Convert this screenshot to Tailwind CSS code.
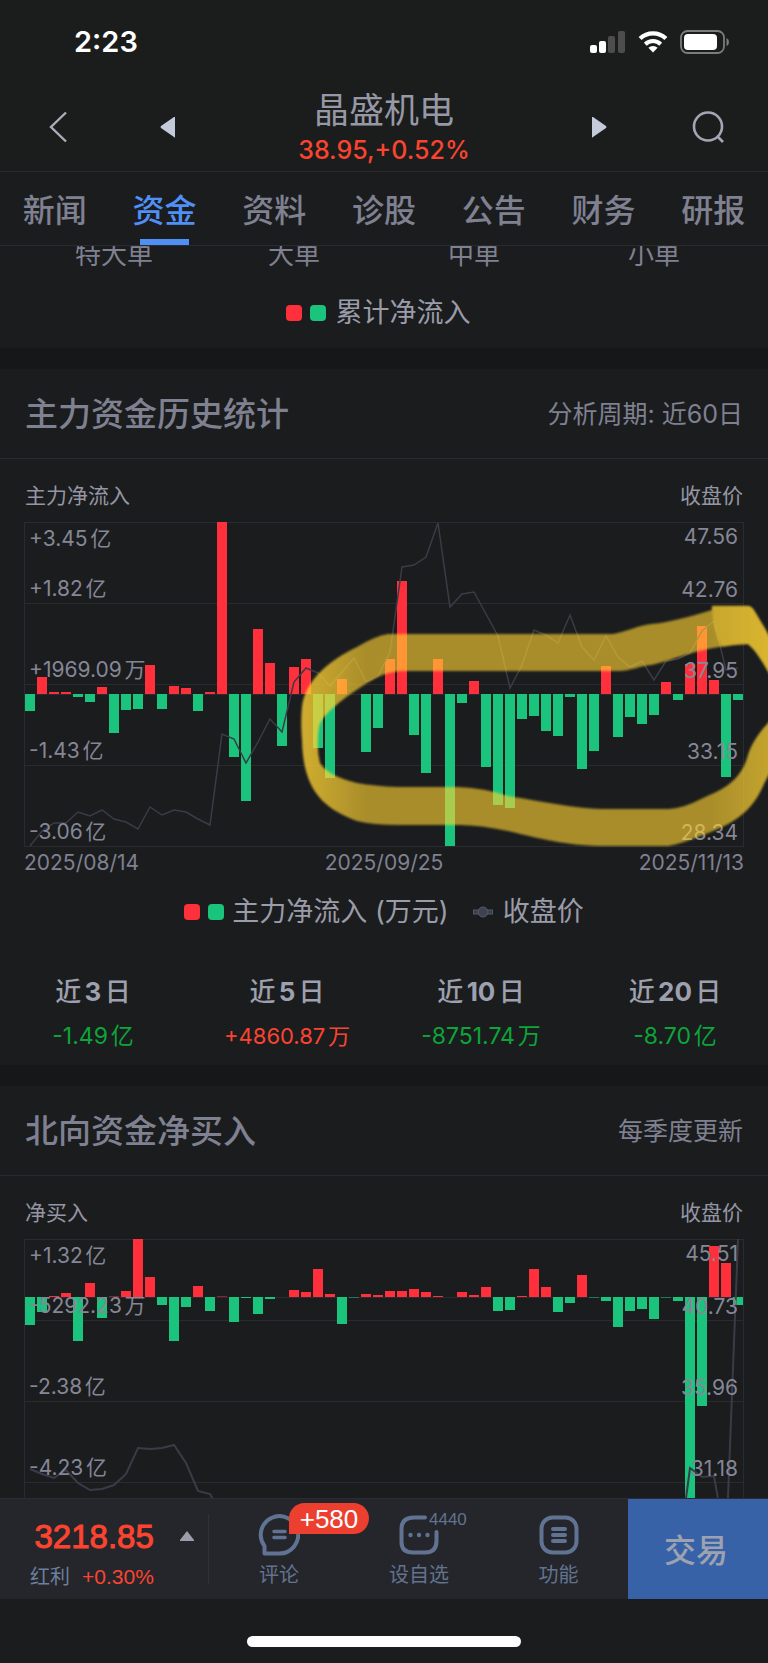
<!DOCTYPE html>
<html lang="zh-CN">
<head>
<meta charset="utf-8">
<meta name="viewport" content="width=device-width, initial-scale=1">
<title>晶盛机电 - 资金</title>
<script src="https://cdn.jsdelivr.net/npm/@tailwindcss/browser@4"></script>
</head>
<body class="bg-[#1b1c1e] font-['Inter','Noto_Sans_CJK_SC',sans-serif] text-[#7f8191] overflow-x-hidden [text-autospace:normal]">

<div class="bg-[#1b1d1c]">
  <!-- status bar -->
  <div class="flex h-[84px] items-center justify-between pl-[74px] pr-[38px]">
    <span class="text-[29px] leading-9 font-semibold text-white">2:23</span>
    <div class="flex items-center gap-3">
      <svg class="h-6 w-9" viewBox="0 0 36 24" aria-hidden="true">
        <rect x="0" y="15" width="7" height="8" rx="2" fill="#fff"/><rect x="9" y="11" width="7" height="12" rx="2" fill="#fff"/>
        <rect x="18" y="6" width="7" height="17" rx="2" fill="#4c4d4c"/><rect x="28" y="1" width="7" height="22" rx="2" fill="#4c4d4c"/>
      </svg>
      <svg class="h-6 w-[30px]" viewBox="0 0 30 24" aria-hidden="true">
        <path d="M15 22.500 L10.400 17.800 A6.600 6.600 0 0 1 19.600 17.800 Z" fill="#fff"/>
        <path d="M7.300 14.200 A11 11 0 0 1 22.700 14.200" fill="none" stroke="#fff" stroke-width="4"/>
        <path d="M2.100 8.600 A18.500 18.500 0 0 1 27.900 8.600" fill="none" stroke="#fff" stroke-width="4.200"/>
      </svg>
      <svg class="h-6 w-[50px]" viewBox="0 0 50 24" aria-hidden="true">
        <rect x="1" y="1" width="43" height="22" rx="6.500" fill="none" stroke="#7b7c7b" stroke-width="1.800"/>
        <rect x="4" y="4" width="33" height="16" rx="4" fill="#fff"/><path d="M46.500 8 Q49 9 49 12 Q49 15 46.500 16 Z" fill="#7b7c7b"/>
      </svg>
    </div>
  </div>
  <!-- header -->
  <header class="flex h-[88px] items-center border-b border-[#2a2b2f]">
    <button class="flex w-[115px] justify-center pb-px" aria-label="返回">
      <svg class="h-8 w-5" viewBox="0 0 20 32"><path d="M18 1.500 L3 16 L18 30.500" fill="none" stroke="#a9adba" stroke-width="2.400"/></svg>
    </button>
    <button class="flex w-[106px] justify-center pb-px" aria-label="上一只">
      <svg class="h-[22px] w-4" viewBox="0 0 16 22"><path d="M15 1 V21 Q15 22 14 21 L1 12 Q0 11 1 10 L14 1 Z" fill="#c3cbdb"/></svg>
    </button>
    <div class="flex-1 text-center">
      <h1 class="text-[35px] leading-[44px] text-[#9698a6]">晶盛机电</h1>
      <p class="text-[25px] leading-9 font-medium text-[#fb4430]">38.95,+0.52%</p>
    </div>
    <button class="flex w-[104px] justify-center pb-px" aria-label="下一只">
      <svg class="h-[22px] w-4" viewBox="0 0 16 22"><path d="M1 1 V21 Q1 22 2 21 L15 12 Q16 11 15 10 L2 1 Z" fill="#c3cbdb"/></svg>
    </button>
    <button class="flex w-[117px] justify-center pb-px" aria-label="搜索">
      <svg class="h-8 w-9" viewBox="0 0 36 32"><circle cx="16" cy="15.500" r="14" fill="none" stroke="#a2a6b3" stroke-width="2.600"/><path d="M25 25 L31 31" stroke="#a2a6b3" stroke-width="2.600"/></svg>
    </button>
  </header>
</div>

<nav class="grid h-[74px] grid-cols-7 border-b border-[#2a2b30] text-[32px] font-medium">
  <a href="#" class="flex items-center justify-center pt-1">新闻</a>
  <a href="#" class="relative flex items-center justify-center pt-1 text-[#5090f5]">资金<span class="absolute bottom-0 h-[6px] w-[49px] bg-[#5090f5]"></span></a>
  <a href="#" class="flex items-center justify-center pt-1">资料</a>
  <a href="#" class="flex items-center justify-center pt-1">诊股</a>
  <a href="#" class="flex items-center justify-center pt-1">公告</a>
  <a href="#" class="flex items-center justify-center pt-1">财务</a>
  <a href="#" class="flex items-center justify-center pt-1">研报</a>
</nav>

<main>
  <section>
    <div class="h-[49px] overflow-hidden px-6">
      <div class="-mt-[9px] grid grid-cols-4 text-center text-[26px] leading-9">
        <span>特大单</span><span>大单</span><span>中单</span><span>小单</span>
      </div>
    </div>
    <div class="flex items-center justify-center pb-[17px] pr-3 text-[27px] leading-9 text-[#9a9ca9]">
      <i class="mr-2 size-4 rounded-[4px] bg-[#ff2f3b]"></i><i class="mr-[10px] size-4 rounded-[4px] bg-[#1ac47d]"></i>累计净流入
    </div>
  </section>

  <div class="h-[21px] bg-[#161719]"></div>

  <section>
    <div class="flex h-[90px] items-center justify-between border-b border-[#292a2f] px-[25px]">
      <h2 class="text-[33px] leading-10 font-medium">主力资金历史统计</h2>
      <span class="text-[25px] leading-9 [text-autospace:no-autospace]">分析周期: 近60日</span>
    </div>
    <div class="flex justify-between px-[25px] pt-[23px] pb-3 text-[21px] leading-7 text-[#9496a3]"><span>主力净流入</span><span>收盘价</span></div>
    <div class="relative px-6">
      <svg id="main-chart" class="h-[325px] w-full" viewBox="0 0 720 325" preserveAspectRatio="none" role="img" aria-label="主力净流入与收盘价"></svg>
      <div class="absolute top-[3px] left-[29px] flex flex-col text-[21px] leading-7 text-[#858796]">
        <span>+3.45亿</span><span class="mt-[22px]">+1.82亿</span><span class="mt-[53px]">+1969.09万</span><span class="mt-[53px]">-1.43亿</span><span class="mt-[53px]">-3.06亿</span>
      </div>
      <div class="absolute top-px right-[30px] flex flex-col text-right text-[21px] leading-7 text-[#858796]">
        <span>47.56</span><span class="mt-[25px]">42.76</span><span class="mt-[53px]">37.95</span><span class="mt-[53px]">33.15</span><span class="mt-[53px]">28.34</span>
      </div>
      <!-- highlighter mark -->
      <svg class="pointer-events-none absolute top-0 left-0 h-[325px] w-full overflow-visible" viewBox="0 0 768 325" preserveAspectRatio="none" aria-hidden="true">
        <defs>
          <linearGradient id="ink" gradientUnits="userSpaceOnUse" x1="300" y1="0" x2="768" y2="0">
            <stop offset="0" stop-color="#ffd333" stop-opacity=".8"/><stop offset=".05" stop-color="#ffd333" stop-opacity=".74"/>
            <stop offset=".14" stop-color="#ffd333" stop-opacity=".62"/><stop offset=".88" stop-color="#ffd333" stop-opacity=".62"/>
            <stop offset="1" stop-color="#ffd333" stop-opacity=".74"/>
          </linearGradient>
          <filter id="soft" x="-5%" y="-5%" width="110%" height="110%"><feGaussianBlur stdDeviation="1.2"/></filter>
        </defs>
        <path fill="url(#ink)" fill-rule="evenodd" filter="url(#soft)" d="M712 84 L748 84 Q752 84 755 90 C762 102 774 120 780 140 C800 200 775 240 764 262 C752 290 735 302 695 316 Q680 322 668 324 L600 324 C560 323 530 314 508 309 Q480 303 460 303 L400 303 Q372 303 357 299 C325 287 303 270 302 218 C301 205 301 195 302 185 C305 158 330 138 357 125 Q375 114 388 112 L613 112 C625 110 640 103 651 102 C665 101 690 95 712 88 Z M748 122 C758 130 764 143 772 156 L782 176 C780 186 775 192 768 201 C755 215 750 226 748 233 C740 262 720 268 701 277 Q684 286 669 287 L601 287 C570 286 530 277 508 274 Q485 266 458 265 L397 265 Q375 264 357 261 Q328 254 320 241 Q316 225 319 205 C322 192 345 175 367 161 Q385 150 400 149 L619 149 C630 149 640 144 651 143 C675 138 700 124 748 122 Z"/>
        <path fill="#ffd333" fill-opacity=".36" filter="url(#soft)" d="M712 84 L748 84 Q752 84 755 90 C762 102 774 120 780 140 L772 156 C764 143 758 130 748 122 Q735 122 722 125 Q712 108 712 84 Z"/>
      </svg>
    </div>
    <div class="mt-[2px] grid grid-cols-3 px-6 text-center text-[21px] leading-7"><span class="text-left">2025/08/14</span><span>2025/09/25</span><span class="text-right">2025/11/13</span></div>
    <div class="mt-[17px] flex items-center justify-center text-[27px] leading-9 text-[#9a9ca9]">
      <i class="mr-2 size-4 rounded-[4px] bg-[#ff2f3b]"></i><i class="mr-2 size-4 rounded-[4px] bg-[#1ac47d]"></i><span>主力净流入 (万元)</span>
      <svg class="mr-[10px] ml-6 h-3 w-5" viewBox="0 0 20 12" aria-hidden="true"><rect x=".500" y="4" width="19" height="4" fill="#3a3d49" stroke="#555866"/><circle cx="10" cy="6" r="5" fill="#3f4350" stroke="#565967"/></svg><span>收盘价</span>
    </div>
    <div class="overflow-hidden pt-11 pb-[13px]">
      <dl class="-mx-1 grid grid-cols-4 text-center">
        <div><dt class="text-[26px] leading-9 font-bold text-[#9da0ae]"><span class="font-medium">近</span>3<span class="font-medium">日</span></dt><dd class="mt-[10px] text-[23px] leading-8 text-[#0ca53a]">-1.49亿</dd></div>
        <div><dt class="text-[26px] leading-9 font-bold text-[#9da0ae]"><span class="font-medium">近</span>5<span class="font-medium">日</span></dt><dd class="mt-[10px] text-[22px] leading-8 text-[#fb4430]">+4860.87万</dd></div>
        <div><dt class="text-[26px] leading-9 font-bold text-[#9da0ae]"><span class="font-medium">近</span>10<span class="font-medium">日</span></dt><dd class="mt-[10px] text-[23px] leading-8 text-[#0ca53a]">-8751.74万</dd></div>
        <div><dt class="text-[26px] leading-9 font-bold text-[#9da0ae]"><span class="font-medium">近</span>20<span class="font-medium">日</span></dt><dd class="mt-[10px] text-[23px] leading-8 text-[#0ca53a]">-8.70亿</dd></div>
      </dl>
    </div>
  </section>

  <div class="h-[21px] bg-[#161719]"></div>

  <section>
    <div class="flex h-[90px] items-center justify-between border-b border-[#292a2f] px-[25px]">
      <h2 class="text-[33px] leading-10 font-medium">北向资金净买入</h2>
      <span class="text-[25px] leading-9">每季度更新</span>
    </div>
    <div class="flex justify-between px-[25px] pt-[23px] pb-3 text-[21px] leading-7 text-[#9496a3]"><span>净买入</span><span>收盘价</span></div>
    <div class="relative h-[259px] overflow-hidden px-6">
      <svg id="north-chart" class="h-[325px] w-full" viewBox="0 0 720 325" preserveAspectRatio="none" role="img" aria-label="北向资金净买入与收盘价"></svg>
      <div class="absolute top-[3px] left-[29px] flex flex-col text-[21px] leading-7 text-[#858796]">
        <span>+1.32亿</span><span class="mt-[22px]">-5292.23万</span><span class="mt-[53px]">-2.38亿</span><span class="mt-[53px]">-4.23亿</span>
      </div>
      <div class="absolute top-px right-[30px] flex flex-col text-right text-[21px] leading-7 text-[#858796]">
        <span>45.51</span><span class="mt-[25px]">40.73</span><span class="mt-[53px]">35.96</span><span class="mt-[53px]">31.18</span>
      </div>
    </div>
  </section>
</main>

<footer>
  <div class="grid h-[101px] grid-cols-[209fr_140fr_140fr_139fr_140fr] border-t border-[#2c2d34] bg-[#25262b]">
    <div class="flex items-center">
      <div class="flex flex-1 pt-3 pl-[30px]">
        <div class="flex flex-col items-end font-['Liberation_Sans','Noto_Sans_CJK_SC',sans-serif]">
          <span class="text-[33px] leading-10 text-[#fb4430] [-webkit-text-stroke:1px]">3218.85</span>
          <span class="mt-1 flex gap-3 text-[20px] leading-8"><span class="text-[#6b7f9e]">红利</span><span class="text-[21px] text-[#fb4430]">+0.30%</span></span>
        </div>
        <svg class="mt-[14px] ml-[26px] h-[10px] w-[14px]" viewBox="0 0 14 10" aria-hidden="true"><path d="M7 0 L14 9 V10 H0 V9 Z" fill="#9b9eaa"/></svg>
      </div>
      <span class="h-[70px] w-px bg-[#303138]"></span>
    </div>
    <button class="relative flex flex-col items-center pt-[15px] text-[20px] leading-7 text-[#62738f]">
      <svg class="h-[42px] w-[42px]" viewBox="0 0 42 42" fill="none" stroke="#607392" stroke-width="4" aria-hidden="true"><path d="M6.500 39.500 V32 A18.700 18.700 0 1 1 21 39.500 Z" stroke-linejoin="round"/><path d="M16 17.500 H27 M16 23.500 H27" stroke-linecap="round" stroke-width="3.600"/></svg>
      <span class="mt-[5px]">评论</span>
      <span class="absolute top-1 left-20 flex h-[31px] w-20 items-center justify-center rounded-2xl rounded-bl-none bg-[#ec3f2f] font-['Liberation_Sans',sans-serif] text-[26px] leading-7 text-white">+580</span>
    </button>
    <button class="relative flex flex-col items-center pt-[15px] text-[20px] leading-7 text-[#62738f]">
      <svg class="h-[42px] w-[42px]" viewBox="0 0 42 42" fill="none" stroke="#607392" stroke-width="4" stroke-linecap="round" aria-hidden="true"><path d="M27 3.500 H16 Q3.500 3.500 3.500 15 V28 Q3.500 38.500 15 38.500 H27 Q38.500 38.500 38.500 27 V18"/><g fill="#607392" stroke="none"><circle cx="12.500" cy="21" r="2.200"/><circle cx="21" cy="21" r="2.200"/><circle cx="29.500" cy="21" r="2.200"/></g></svg>
      <span class="mt-[5px]">设自选</span>
      <span class="absolute top-[9px] left-20 font-['Liberation_Sans',sans-serif] text-[17px] leading-6">4440</span>
    </button>
    <button class="flex flex-col items-center pt-[15px] text-[20px] leading-7 text-[#62738f]">
      <svg class="h-[42px] w-[42px]" viewBox="0 0 42 42" fill="none" stroke="#607392" stroke-width="4" stroke-linecap="round" aria-hidden="true"><rect x="3.500" y="3.500" width="35" height="35" rx="11"/><path d="M15 15 H27 M15 21 H27 M15 27 H27"/></svg>
      <span class="mt-[5px]">功能</span>
    </button>
    <button class="bg-[#3862a8] pt-1 pr-1 text-[32px] leading-10 font-medium text-[#9da2b0]">交易</button>
  </div>
  <div class="flex h-16 items-end justify-center pb-4"><span class="h-[11px] w-[274px] rounded-full bg-white"></span></div>
</footer>

<script>
// Draws gridlines, signed bars (red up, green down) and closing-price lines.
function draw(id, zero, bars, lines) {
  var s = '<g stroke="#292a32">' + [81, 162, 243].map(function (y) {
    return '<path d="M0 ' + (y + .5) + 'H720"/>';
  }).join('') + '<path d="M0 ' + (zero + .5) + 'H720"/><rect x=".5" y=".5" width="719" height="324" fill="none"/></g>';
  bars.forEach(function (v, i) {
    if (v) s += '<rect x="' + (1 + 12 * i) + '" y="' + (v > 0 ? zero - v : zero) + '" width="10" height="' + Math.abs(v) + '" fill="' + (v > 0 ? '#ff2f3b' : '#1ac47d') + '"/>';
  });
  lines.forEach(function (l) {
    s += '<polyline fill="none" stroke="#3b3b47" stroke-width="' + l.w + '" points="' + l.ys.map(function (y, i) { return (6 + 12 * (l.from + i)) + ',' + y; }).join(' ') + '"/>';
  });
  document.getElementById(id).innerHTML = s;
}
draw('main-chart', 172,
  [-17,17,2,2,-3,-8,7,-39,-16,-15,29,-15,8,6,-17,2,172,-63,-107,65,31,-52,27,35,-54,-84,15,0,-58,-34,35,113,-41,-79,35,-152,-9,13,-73,-111,-114,-25,-22,-37,-42,-3,-75,-57,28,-43,-23,-30,-21,12,-6,30,68,14,-83,-6],
  [{from: 0, w: 1.5, ys: [324,309,301,301,290,294,288,297,300,307,285,293,288,290,297,303,212,217,241,220,197,210,160,146,151,164,150,136,160,154,130,45,43,35,1,85,72,70,92,114,166,143,108,113,121,93,125,138,114,135,145,139,158,139,137,131,109,99,148,146]}]);
draw('north-chart', 58,
  [-28,-15,1,4,-44,14,-21,.5,6,58,20,-8,-44,-10,11,-14,.5,-25,-1,-17,-2,0,7,5,28,3,-27,-.5,3,2,6,6,8,5,1,0,5,2,10,-14,-13,1,28,10,-15,-6,22,-.5,-4,-30,-14,-12,-22,-.5,-4,-260,-109,51,34,-8],
  [{from: 0, w: 2, ys: [230,235,239,231,244,251,250,246,235,209,210,209,206,224,252,255,275]}, {from: 54, w: 2, ys: [320,229,238,237,305]}, {from: 58, w: 2, ys: [310,0]}]);
</script>
</body>
</html>
